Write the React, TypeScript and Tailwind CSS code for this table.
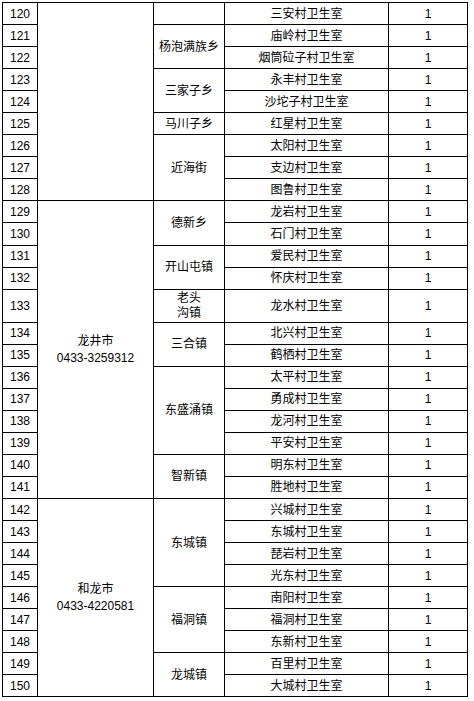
const villages = [
  '三安村卫生室',
  '庙岭村卫生室',
  '烟筒砬子村卫生室',
  '永丰村卫生室',
  '沙坨子村卫生室',
  '红星村卫生室',
  '太阳村卫生室',
  '支边村卫生室',
  '图鲁村卫生室',
  '龙岩村卫生室',
  '石门村卫生室',
  '爱民村卫生室',
  '怀庆村卫生室',
  '龙水村卫生室',
  '北兴村卫生室',
  '鹤栖村卫生室',
  '太平村卫生室',
  '勇成村卫生室',
  '龙河村卫生室',
  '平安村卫生室',
  '明东村卫生室',
  '胜地村卫生室',
  '兴城村卫生室',
  '东城村卫生室',
  '琵岩村卫生室',
  '光东村卫生室',
  '南阳村卫生室',
  '福洞村卫生室',
  '东新村卫生室',
  '百里村卫生室',
  '大城村卫生室',
];

interface Merged {
  lines: string[];
  span: number;
}

const cities: Merged[] = [
  { lines: [], span: 9 },
  { lines: ['龙井市', '0433-3259312'], span: 13 },
  { lines: ['和龙市', '0433-4220581'], span: 9 },
];

const towns: Merged[] = [
  { lines: [], span: 1 },
  { lines: ['杨泡满族乡'], span: 2 },
  { lines: ['三家子乡'], span: 2 },
  { lines: ['马川子乡'], span: 1 },
  { lines: ['近海街'], span: 3 },
  { lines: ['德新乡'], span: 2 },
  { lines: ['开山屯镇'], span: 2 },
  { lines: ['老头', '沟镇'], span: 1 },
  { lines: ['三合镇'], span: 2 },
  { lines: ['东盛涌镇'], span: 4 },
  { lines: ['智新镇'], span: 2 },
  { lines: ['东城镇'], span: 4 },
  { lines: ['福洞镇'], span: 3 },
  { lines: ['龙城镇'], span: 2 },
];

const SPAN_CLASS: Record<number, string> = {
  1: 'row-span-1',
  2: 'row-span-2',
  3: 'row-span-3',
  4: 'row-span-4',
  9: 'row-span-9',
  13: 'row-span-13',
};

// index of the first row -> merged cell starting there
function byStartRow(items: Merged[]) {
  const map = new Map<number, Merged>();
  let start = 0;
  for (const item of items) {
    map.set(start, item);
    start += item.span;
  }
  return map;
}

const cityStarts = byStartRow(cities);
const townStarts = byStartRow(towns);

const cell = 'flex items-center justify-center border-r border-b border-black text-center';

export default function App() {
  return (
    <div className="min-h-screen bg-white pt-[2px] pl-[2px] text-[12px] leading-none text-black font-['Liberation_Sans','Noto_Sans_CJK_SC',sans-serif]">
      <div className="grid w-max grid-cols-[35px_116px_71px_164px_79px] grid-rows-[repeat(13,22.05px)_33px_repeat(17,22.05px)] border-l border-t border-black">
        {villages.map((name, i) => {
          const city = cityStarts.get(i);
          const town = townStarts.get(i);
          return [
            <div key={`no-${i}`} className={cell}>
              {120 + i}
            </div>,
            city && (
              <div key={`city-${i}`} className={`${cell} ${SPAN_CLASS[city.span]} flex-col gap-[5px]`}>
                {city.lines.map((line) => (
                  <span key={line}>{line}</span>
                ))}
              </div>
            ),
            town && (
              <div key={`town-${i}`} className={`${cell} ${SPAN_CLASS[town.span]} flex-col gap-[3px]`}>
                {town.lines.map((line) => (
                  <span key={line}>{line}</span>
                ))}
              </div>
            ),
            <div key={`v-${i}`} className={cell}>
              {name}
            </div>,
            <div key={`n-${i}`} className={cell}>
              1
            </div>,
          ];
        })}
      </div>
    </div>
  );
}
